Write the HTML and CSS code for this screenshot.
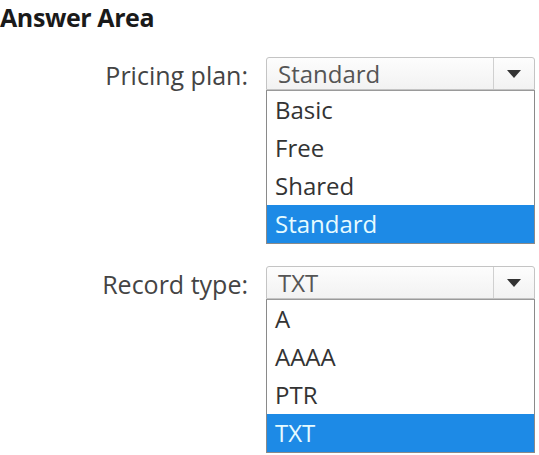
FILE: index.html
```html
<!DOCTYPE html>
<html lang="en">
<head>
  <meta charset="UTF-8" />
  <meta name="viewport" content="width=device-width, initial-scale=1.0"/>
  <title>Answer Area</title>
  <link rel="stylesheet" href="styles.css">
</head>
<body>

<h1 class="title">Answer Area</h1>

<div class="answer">
  <div class="label">Pricing plan:</div>
  <div class="dropdown">
    <div class="selected">
      <span class="value">Standard</span>
      <span class="arrow"></span>
    </div>
    <ul class="options">
      <li>Basic</li>
      <li>Free</li>
      <li>Shared</li>
      <li class="active">Standard</li>
    </ul>
  </div>

  <div class="label">Record type:</div>
  <div class="dropdown">
    <div class="selected">
      <span class="value">TXT</span>
      <span class="arrow"></span>
    </div>
    <ul class="options">
      <li>A</li>
      <li>AAAA</li>
      <li>PTR</li>
      <li class="active">TXT</li>
    </ul>
  </div>
</div>

</body>
</html>
```

FILE: styles.css
```css
body{
  margin:0;
  background:#fff;
  font-family:"Open Sans", "Noto Sans", sans-serif;
  color:#333;
}
.title{
  margin:0;padding:0;
  font-size:25px;font-weight:700;color:#1a1a1a;
  letter-spacing:-0.4px;
  line-height:34px;
  height:57px;
}
.answer{
  display:grid;
  grid-template-columns:248px 269px;
  column-gap:18px;
  row-gap:22px;
}
.label{
  text-align:right;
  font-size:25px;
  color:#444;
  line-height:36px;
}
.dropdown{
  display:flex;flex-direction:column;
}
.selected{
  display:flex;
  height:33px;
  border:1px solid #c4c4c4;
  border-radius:3px 3px 0 0;
  background:linear-gradient(#fdfdfd,#f2f2f2);
  box-sizing:border-box;
}
.value{
  flex:1;
  padding-left:11px;
  font-size:24px;line-height:31px;
  color:#555;
}
.arrow{
  width:40px;
  border-left:1px solid #d0d0d0;
  display:flex;align-items:center;justify-content:center;
}
.arrow::after{
  content:"";
  border-left:7px solid transparent;
  border-right:7px solid transparent;
  border-top:8px solid #333;
}
.options{
  list-style:none;margin:0;padding:0;
  border:1px solid #8a8a8a;
  border-top:1px solid #9a9a9a;
}
.options li{
  height:38px;line-height:38px;
  padding-left:8px;
  font-size:24px;
  color:#333;
}
.options li.active{
  background:#1d8ae6;
  color:#e6fbff;
}
```
